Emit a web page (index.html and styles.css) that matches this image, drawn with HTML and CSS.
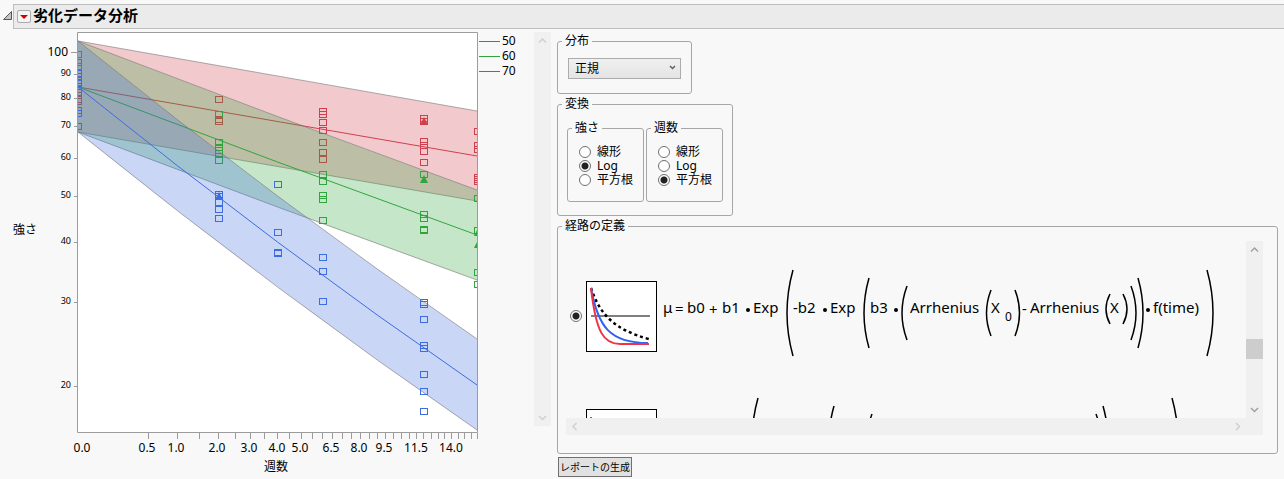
FILE: index.html
```html
<!DOCTYPE html>
<html lang="ja">
<head>
    <meta charset="UTF-8">
    <meta name="viewport" content="width=device-width, initial-scale=1.0">
    <title>劣化データ分析</title>
    <link rel="stylesheet" href="styles.css">
</head>
<body>
    <header class="outline">
        <svg class="disclosure" viewBox="0 0 10 10"><path d="M0.5 8.500 L8.500 0.500 V8.500 Z"/></svg>
        <div class="title-bar">
            <button class="menu-btn" aria-label="メニュー">
                <svg viewBox="0 0 14 14"><path d="M3 5 H11 L7 9 Z"/></svg>
            </button>
            <h1>劣化データ分析</h1>
        </div>
    </header>

    <main class="content">
        <svg class="chart" viewBox="0 30 530 446">
            <defs>
                <clipPath id="plotClip"><rect x="78" y="33" width="399" height="399"/></clipPath>
            </defs>
            <rect class="plot" x="77.500" y="32.500" width="400" height="400"/>
            <g id="series" clip-path="url(#plotClip)"></g>
            <path class="frame" d="M77.500 32.500 H477.500 V432.500 H77.500 Z"/>
            <g id="axes"></g>
            <text x="13" y="234">強さ</text>
            <text x="264" y="471">週数</text>
            <g class="legend">
                <path class="s50" d="M479 41.500 H500"/><text x="502" y="45">50</text>
                <path class="s60" d="M479 56.500 H500"/><text x="502" y="60">60</text>
                <path class="s70" d="M479 71.500 H500"/><text x="502" y="75">70</text>
            </g>
        </svg>

        <div class="scrollbar vertical disabled">
            <svg class="arrow" viewBox="0 0 17 17"><path d="M5 10.500 L8.500 7 L12 10.500"/></svg>
            <svg class="arrow" viewBox="0 0 17 17"><path d="M5 7 L8.500 10.500 L12 7"/></svg>
        </div>

        <form class="settings">
            <fieldset class="distribution">
                <legend>分布</legend>
                <div class="select-wrap">
                    <select aria-label="分布">
                        <option>正規</option>
                    </select>
                    <svg class="caret" viewBox="0 0 7 5"><path d="M1 1 L3.500 3.500 L6 1"/></svg>
                </div>
            </fieldset>

            <fieldset class="transform">
                <legend>変換</legend>
                <div class="transform-row">
                    <fieldset class="options">
                        <legend>強さ</legend>
                        <label><input type="radio" name="strength">線形</label>
                        <label><input type="radio" name="strength" checked>Log</label>
                        <label><input type="radio" name="strength">平方根</label>
                    </fieldset>
                    <fieldset class="options">
                        <legend>週数</legend>
                        <label><input type="radio" name="weeks">線形</label>
                        <label><input type="radio" name="weeks">Log</label>
                        <label><input type="radio" name="weeks" checked>平方根</label>
                    </fieldset>
                </div>
            </fieldset>

            <fieldset class="path">
                <legend>経路の定義</legend>
                <div class="scroll-area">
                    <div class="viewport">
                        <label class="model">
                            <input type="radio" name="model" checked>
                            <svg class="thumb" viewBox="0 0 71 71">
                                <rect x="0.500" y="0.500" width="70" height="70"/>
                                <path class="base" d="M5 35 H64"/>
                                <path class="dotted" d="M5 7 C14 34 29 49 63 58"/>
                                <path class="blue" d="M5 7 C12 46 24 62 62 62"/>
                                <path class="red" d="M5 7 C10 52 18 63 34 63 H63"/>
                            </svg>
                            <svg class="formula" viewBox="0 0 560 128">
                                <text x="3" y="61">μ</text>
                                <text x="15" y="62">=</text>
                                <text x="27" y="61">b0</text>
                                <text x="49" y="63">+</text>
                                <text x="62" y="61">b1</text>
                                <circle cx="88" cy="58" r="2"/>
                                <text x="93" y="61">Exp</text>
                                <path d="M133 18 Q121 61 133 104"/>
                                <text x="133" y="61">-b2</text>
                                <circle cx="165" cy="58" r="2"/>
                                <text x="170" y="61">Exp</text>
                                <path d="M209 26 Q199 61 209 96"/>
                                <text x="210" y="61">b3</text>
                                <circle cx="236" cy="58" r="2"/>
                                <path d="M247 34 Q237 61 247 88"/>
                                <text x="250" y="61">Arrhenius</text>
                                <path d="M331 38 Q322 61 331 84"/>
                                <text x="331" y="61">X</text>
                                <text class="sub" x="345" y="69">0</text>
                                <path d="M355 38 Q364 61 355 84"/>
                                <text x="362" y="62">-</text>
                                <text x="370" y="61">Arrhenius</text>
                                <path d="M450 42 Q442 57 450 72"/>
                                <text x="450" y="61">X</text>
                                <path d="M463 42 Q471 57 463 72"/>
                                <path d="M471 34 Q481 61 471 88"/>
                                <path d="M478 26 Q488 61 478 96"/>
                                <circle cx="488" cy="58" r="2"/>
                                <text x="493" y="61">f(time)</text>
                                <path d="M547 18 Q559 61 547 104"/>
                            </svg>
                        </label>
                        <label class="model">
                            <input type="radio" name="model">
                            <svg class="thumb" viewBox="0 0 71 71">
                                <rect x="0.500" y="0.500" width="70" height="70"/>
                                <path class="base" d="M5 35 H64"/>
                                <path class="red" d="M5 8 C10 52 18 63 34 63 H63"/>
                            </svg>
                            <svg class="formula" viewBox="0 0 560 128">
                                <path d="M98 18 Q86 61 98 104"/>
                                <path d="M174 26 Q164 61 174 96"/>
                                <path d="M212 34 Q202 61 212 88"/>
                                <path d="M436 34 Q446 61 436 88"/>
                                <path d="M443 26 Q453 61 443 96"/>
                                <path d="M512 18 Q524 61 512 104"/>
                            </svg>
                        </label>
                    </div>
                    <div class="scrollbar vertical">
                        <svg class="arrow" viewBox="0 0 17 17"><path d="M5 10.500 L8.500 7 L12 10.500"/></svg>
                        <div class="thumb-bar"></div>
                        <svg class="arrow" viewBox="0 0 17 17"><path d="M5 7 L8.500 10.500 L12 7"/></svg>
                    </div>
                    <div class="scrollbar horizontal disabled">
                        <svg class="arrow" viewBox="0 0 17 17"><path d="M10.500 5 L7 8.500 L10.500 12"/></svg>
                        <svg class="arrow" viewBox="0 0 17 17"><path d="M7 5 L10.500 8.500 L7 12"/></svg>
                    </div>
                </div>
            </fieldset>

            <button type="button" class="report-btn">レポートの生成</button>
        </form>
    </main>

    <script src="chart.js"></script>
</body>
</html>
```

FILE: chart.js
```js
const LEFT = 78;
const RIGHT = 477;

// upper / middle / lower give the height at week 0 and week 16, bend is the sag halfway
const series = [
    {
        name: 's50', bend: 0,
        upper: [41, 111], middle: [87, 156], lower: [132, 201],
        points: {
            0: [62, 92, 95, 99, 101],
            2: [99, 119, 121, 142],
            6: [111, 114, 122, 130, 142, 152, 159],
            12: [118, 121, 141, 145, 151, 162],
            16: [131, 145, 149, 177, 179, 181]
        },
        triangles: { 12: [121] }
    },
    {
        name: 's60', bend: 2,
        upper: [41, 190], middle: [87, 235], lower: [132, 280],
        points: {
            0: [54, 66, 82],
            2: [114, 142, 147, 150, 153, 160],
            6: [174, 181, 195, 199, 220],
            12: [174, 214, 218, 229, 230],
            16: [198, 230, 272, 284]
        },
        triangles: { 12: [179], 16: [232, 244] }
    },
    {
        name: 's70', bend: 12,
        upper: [41, 339], middle: [87, 385], lower: [132, 430],
        points: {
            0: [73, 76, 80, 83, 86, 110, 113, 126],
            2: [194, 196, 202, 209, 218],
            4: [184, 232, 252, 253],
            6: [257, 271, 301],
            12: [302, 304, 319, 345, 348, 374, 391, 411]
        },
        triangles: { 2: [196] }
    }
];

const yTicks = [[100, 52], [90, 74], [80, 98], [70, 126], [60, 158], [50, 196], [40, 242], [30, 302], [20, 386]];
const xLabels = [['0.0', 82], ['0.5', 147], ['1.0', 176], ['2.0', 217], ['3.0', 249], ['4.0', 277], ['5.0', 300],
    ['6.5', 331], ['8.0', 359], ['9.5', 384], ['11.5', 416], ['14.0', 451]];

// the week axis has a square root scale
function xPos(week) {
    return Math.round(78 + 100 * Math.sqrt(week));
}

function controlPoint(ends, bend) {
    return `${(LEFT + RIGHT) / 2} ${(ends[0] + ends[1]) / 2 + bend}`;
}

function curve(ends, bend) {
    return `M${LEFT} ${ends[0]} Q${controlPoint(ends, bend)} ${RIGHT} ${ends[1]}`;
}

function drawSeries(s) {
    let html = `<g class="${s.name}">`;
    html += `<path class="band" d="${curve(s.upper, s.bend)} V${s.lower[1]} Q${controlPoint(s.lower, s.bend)} ${LEFT} ${s.lower[0]} Z"/>`;
    html += `<path class="edge" d="${curve(s.upper, s.bend)}"/><path class="edge" d="${curve(s.lower, s.bend)}"/>`;
    html += `<path class="line" d="${curve(s.middle, s.bend)}"/>`;
    for (const week in s.points) {
        s.points[week].forEach(y => {
            html += `<rect class="marker" x="${xPos(week) - 3.5}" y="${y - 2.5}" width="7" height="6"/>`;
        });
    }
    for (const week in s.triangles) {
        s.triangles[week].forEach(y => {
            const x = xPos(week);
            html += `<path class="triangle" d="M${x} ${y - 4} L${x + 4} ${y + 4} H${x - 4} Z"/>`;
        });
    }
    return html + '</g>';
}

function drawAxes() {
    let html = '';
    yTicks.forEach(([value, y]) => {
        const start = value === 100 ? 71 : 74;
        html += `<path class="tick" d="M${start} ${y + 0.5} H77"/>`;
        html += value === 100
            ? `<text class="end" x="68" y="${y + 4}">${value}</text>`
            : `<text class="end small" x="71" y="${y + 2}">${value}</text>`;
    });
    for (let week = 0.5; week <= 16; week += 0.5) {
        html += `<path class="tick" d="M${xPos(week) - 0.5} 433 V439"/>`;
    }
    xLabels.forEach(([label, x]) => {
        html += `<text class="mid" x="${x}" y="452">${label}</text>`;
    });
    return html;
}

document.getElementById('series').innerHTML = series.map(drawSeries).join('');
document.getElementById('axes').innerHTML = drawAxes();
```

FILE: styles.css
```css
:root {
    --page: #f8f8f8;
    --border: #a6a6a6;
    --track: #f0f0f0;
    --red: #d13f4d;
    --green: #31a53d;
    --blue: #3d6de0;
}

* {
    margin: 0;
    padding: 0;
    box-sizing: border-box;
}

body {
    background: var(--page);
    color: #000;
    font-family: "Noto Sans", "Noto Sans CJK JP", sans-serif;
    font-size: 12px;
    line-height: 16px;
}

svg {
    display: block;
    flex: none;
}

button,
select {
    font: inherit;
    color: inherit;
}

/* title */
.outline {
    display: flex;
    padding: 4px 0 1px 3px;
}

.disclosure {
    width: 10px;
    height: 10px;
    margin-top: 7px;
    fill: #c4c4c4;
    stroke: #555;
}

.title-bar {
    flex: 1;
    display: flex;
    align-items: center;
    gap: 2px;
    height: 25px;
    padding-left: 3px;
    background: #ebebeb;
    border: 1px solid #bdbdbd;
    border-right: none;
}

.title-bar h1 {
    font-size: 15px;
    line-height: 20px;
    padding-bottom: 3px;
}

.menu-btn {
    width: 14px;
    height: 13px;
    background: #f4f4f4;
    border: 1px solid #aaa;
    border-radius: 2px;
}

.menu-btn svg {
    width: 14px;
    height: 14px;
    margin: -1px;
    fill: #d00000;
}

.content {
    display: grid;
    grid-template-columns: 530px 17px minmax(0, 1fr);
    align-items: start;
    padding-right: 6px;
}

/* chart */
.chart {
    width: 530px;
    height: 446px;
}

.plot {
    fill: #fff;
}

.frame,
.tick {
    fill: none;
    stroke: #9c9c9c;
}

.band {
    fill: currentColor;
    opacity: 0.28;
}

.edge {
    fill: none;
    stroke: #777;
    stroke-opacity: 0.6;
}

.line,
.marker,
.legend path {
    fill: none;
    stroke: currentColor;
}

.triangle {
    fill: currentColor;
}

.s50 { color: var(--red); }
.s60 { color: var(--green); }
.s70 { color: var(--blue); }

.end { text-anchor: end; }
.mid { text-anchor: middle; }
.small { font-size: 9px; }

/* scrollbars */
.scrollbar {
    display: flex;
    justify-content: space-between;
    background: var(--track);
}

.scrollbar.vertical {
    flex-direction: column;
    width: 17px;
}

.scrollbar.horizontal {
    grid-column: 1 / -1;
    height: 17px;
    padding-right: 17px;
}

.content > .scrollbar {
    height: 394px;
    margin: 2px 0 0 4px;
}

.arrow {
    width: 17px;
    height: 17px;
    fill: none;
    stroke: #a0a0a0;
    stroke-width: 1.5;
}

.disabled .arrow {
    stroke: #d0d0d0;
}

.thumb-bar {
    height: 20px;
    margin-top: 39px;
    background: #cdcdcd;
}

/* settings */
.settings {
    display: flex;
    flex-direction: column;
    align-items: flex-start;
    gap: 2px;
    padding: 3px 0 0 10px;
}

fieldset {
    min-width: 0;
    padding: 8px 4px 14px;
    border: 1px solid var(--border);
    border-radius: 3px;
}

legend {
    padding: 0 3px;
}

.distribution {
    width: 135px;
    padding-top: 9px;
}

.select-wrap {
    position: relative;
    margin: 0 6px;
}

.select-wrap select {
    appearance: none;
    display: block;
    width: 100%;
    height: 21px;
    padding: 0 6px;
    background: linear-gradient(#f0f0f0, #e4e4e4);
    border: 1px solid #acacac;
    border-radius: 0;
}

.caret {
    position: absolute;
    top: 7px;
    right: 5px;
    width: 7px;
    height: 5px;
    fill: none;
    stroke: #606060;
    stroke-width: 1.5;
    pointer-events: none;
}

.transform {
    padding-bottom: 13px;
}

.transform-row {
    display: flex;
    gap: 2px;
    margin: 0 5px;
}

.options {
    width: 77px;
    padding: 9px 0 14px 4px;
}

.options label {
    display: flex;
    align-items: center;
    gap: 6px;
    margin-left: 7px;
    line-height: 14px;
    white-space: nowrap;
}

input[type="radio"] {
    appearance: none;
    flex: none;
    width: 12px;
    height: 12px;
    background: #fff;
    border: 1px solid #707070;
    border-radius: 50%;
}

input[type="radio"]:checked {
    background: radial-gradient(circle, #222 0 3px, #fff 4px);
}

.path {
    width: 100%;
    padding: 7px 4px 18px;
}

.scroll-area {
    display: grid;
    grid-template-columns: minmax(0, 1fr) 17px;
    grid-template-rows: 177px 17px;
    margin: 0 10px 0 4px;
}

.viewport {
    overflow: hidden;
    padding: 11px 0 0 4px;
}

.model {
    display: flex;
    align-items: center;
    height: 128px;
}

.thumb {
    width: 71px;
    height: 71px;
    margin: 0 3px 0 4px;
    fill: none;
    stroke-width: 2;
}

.thumb rect {
    fill: #fff;
    stroke: #000;
    stroke-width: 1;
}

.thumb .base {
    stroke: #555;
    stroke-width: 1.5;
}

.thumb .dotted {
    stroke: #000;
    stroke-width: 2.5;
    stroke-dasharray: 3 3;
}

.thumb .blue { stroke: #2f62f0; }
.thumb .red { stroke: #ee3347; }

.formula {
    width: 560px;
    height: 128px;
    font-size: 15px;
}

.formula path {
    fill: none;
    stroke: #000;
    stroke-width: 1.5;
}

.formula .sub {
    font-size: 12px;
}

.report-btn {
    height: 20px;
    margin: 1px 0 0 1px;
    padding: 0 1px;
    background: #e1e1e1;
    border: 1px solid #707070;
    font-size: 10px;
}
```
